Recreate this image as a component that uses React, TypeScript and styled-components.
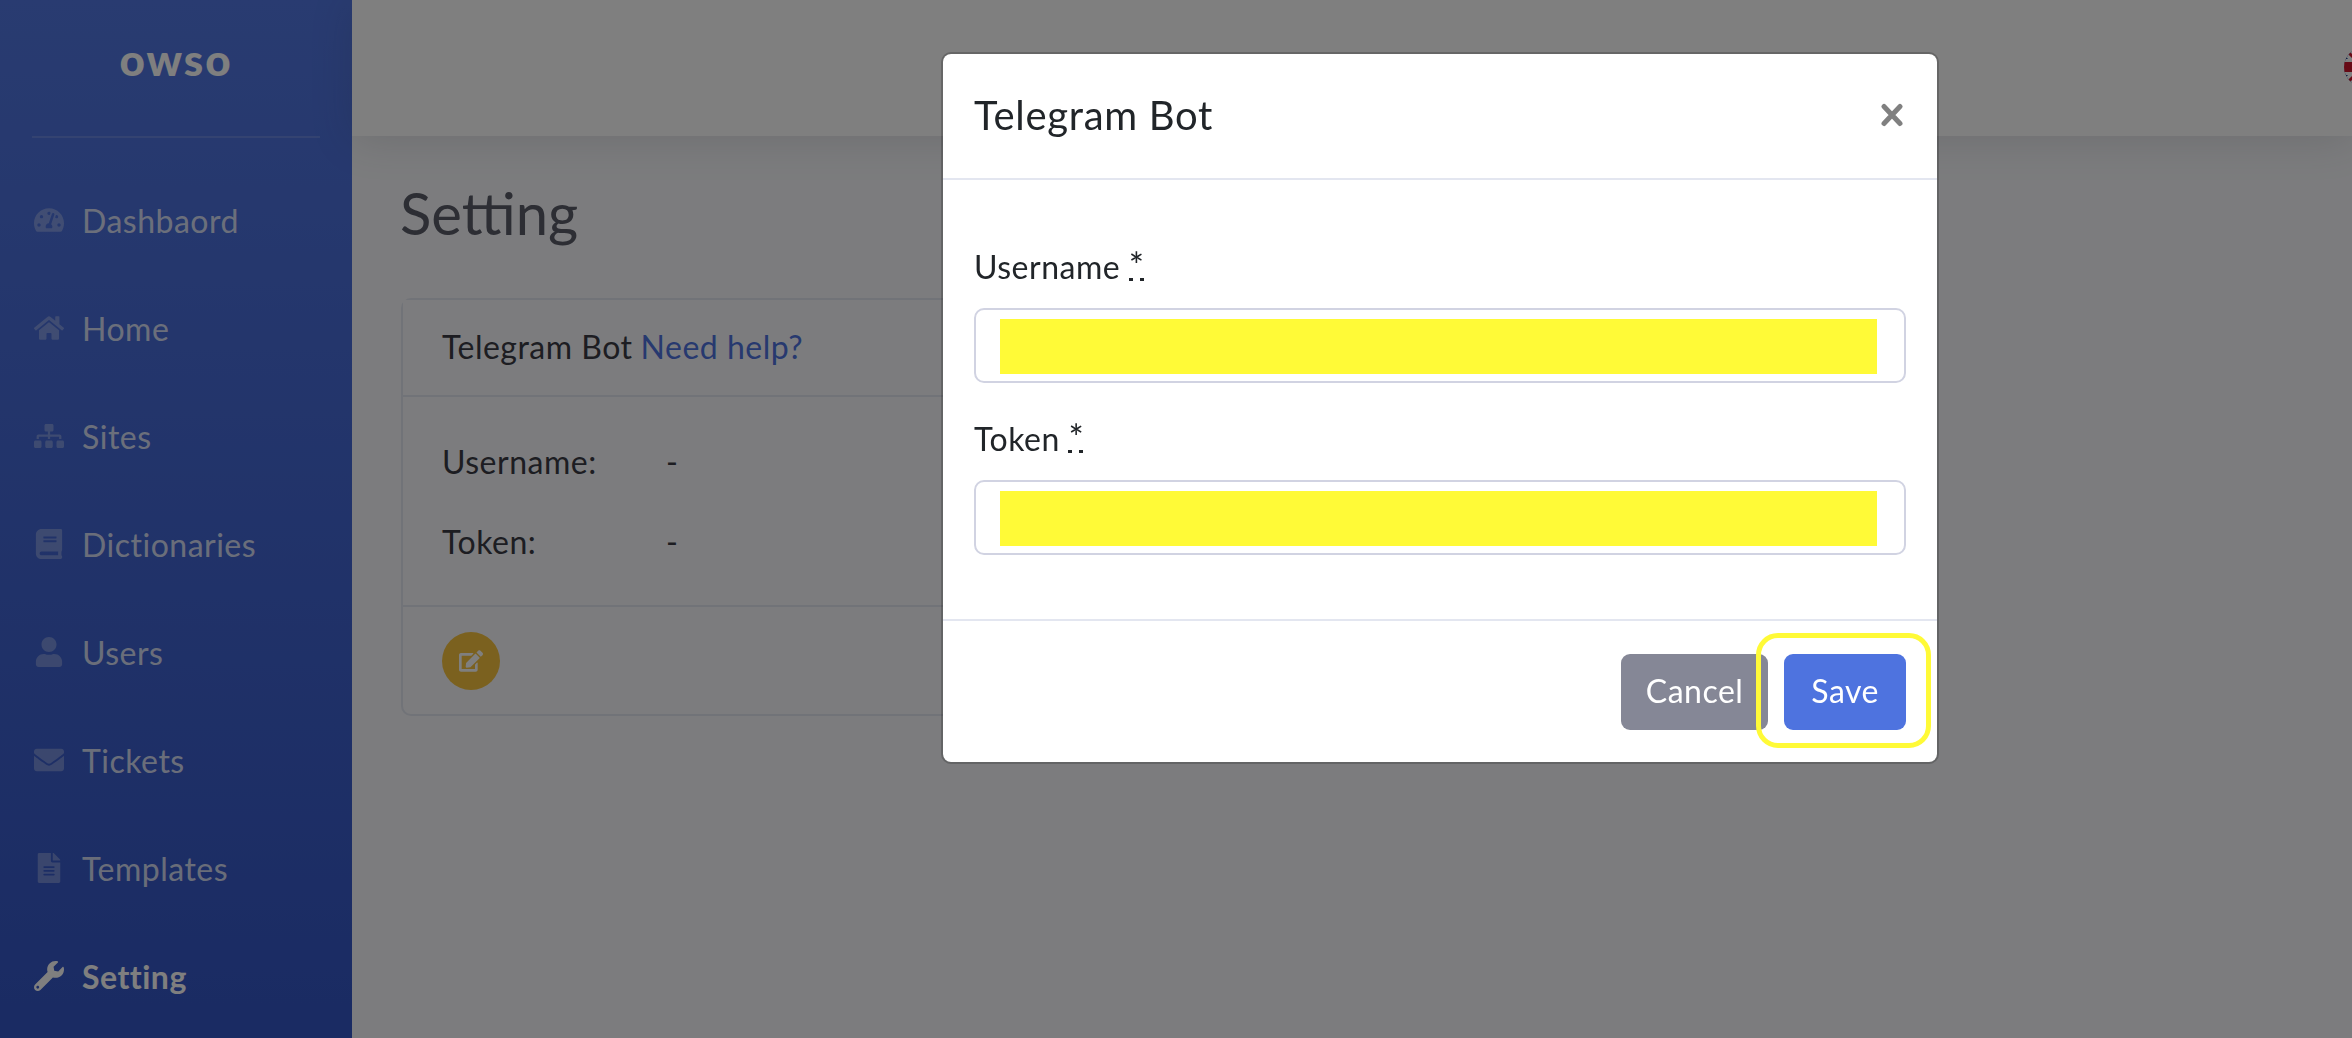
import React from "react";
import styled, { createGlobalStyle } from "styled-components";
import { FaTachometerAlt, FaHome, FaSitemap, FaBook, FaUser, FaEnvelope, FaFileAlt, FaWrench, FaEdit } from "react-icons/fa";

const Global = createGlobalStyle`
  html, body { margin: 0; padding: 0; height: 100%; overflow: hidden; background: #f8f9fc; }
  body { font-family: "Lato", "Noto Sans", sans-serif; font-size: 32px; letter-spacing: 0.5px; color: #3a3b45; }
  * { box-sizing: border-box; }
`;

const Page = styled.div`
  display: flex;
  height: 1038px;
  overflow: hidden;
`;
const Sidebar = styled.aside`
  width: 352px;
  flex: none;
  background: linear-gradient(180deg, #5277e2 0%, #3456c6 100%);
  padding: 0;
`;
const Brand = styled.div`
  height: 136px;
  display: flex;
  align-items: center;
  justify-content: center;
  padding-bottom: 19px;
  color: #fff;
  font-weight: 900;
  font-size: 44px;
  letter-spacing: 2px;
`;
const Divider = styled.hr`
  margin: 0 32px;
  border: 0;
  height: 2px;
  background: rgba(255, 255, 255, 0.15);
`;
const Nav = styled.nav`
  display: flex;
  flex-direction: column;
  padding-top: 28px;
`;
const NavItem = styled.a<{ $active?: boolean }>`
  height: 108px;
  display: flex;
  align-items: center;
  padding-left: 32px;
  color: ${(p) => (p.$active ? "#fff" : "rgba(255,255,255,.8)")};
  font-weight: ${(p) => (p.$active ? 700 : 400)};
`;
const NavIcon = styled.span<{ $active?: boolean }>`
  width: 34px;
  margin-right: 16px;
  display: flex;
  justify-content: center;
  font-size: 30px;
  color: ${(p) => (p.$active ? "#fff" : "rgba(255,255,255,.3)")};
`;
const Main = styled.main`
  flex: 1;
  min-width: 0;
  display: flex;
  flex-direction: column;
`;
const Topbar = styled.header`
  height: 136px;
  flex: none;
  background: #fff;
  box-shadow: 0 4px 40px rgba(58, 59, 69, 0.15);
  display: flex;
  justify-content: flex-end;
  align-items: flex-start;
  padding-top: 48px;
  overflow: hidden;
`;
const Flag = styled.svg`
  width: 38px;
  height: 38px;
  flex: none;
  margin-right: -30px;
`;
const Content = styled.div`
  padding: 45px 48px;
`;
const Title = styled.h1`
  margin: 0 0 53px;
  font-weight: 400;
  font-size: 58px;
  line-height: 64px;
  letter-spacing: 0;
  color: #5a5c69;
`;
const Card = styled.section`
  width: 1450px;
  height: 418px;
  margin-left: 1px;
  border: 2px solid #e3e6f0;
  border-radius: 10px;
  display: flex;
  flex-direction: column;
`;
const CardHeader = styled.div`
  height: 97px;
  flex: none;
  padding: 0 39px 2px;
  display: flex;
  align-items: center;
  gap: 8px;
  border-bottom: 2px solid #e3e6f0;
  background: #f8f9fc;
  color: #3a3b45;
`;
const HelpLink = styled.a`
  color: #4e73df;
`;
const CardBody = styled.div`
  height: 210px;
  flex: none;
  padding: 24px 39px 0;
  border-bottom: 2px solid #e3e6f0;
`;
const InfoRow = styled.div`
  height: 80px;
  display: flex;
  align-items: center;
`;
const InfoLabel = styled.span`
  width: 224px;
`;
const CardFooter = styled.div`
  flex: 1;
  display: flex;
  align-items: center;
  padding: 0 39px;
`;
const EditButton = styled.button`
  width: 58px;
  height: 58px;
  border: 0;
  border-radius: 50%;
  background: #f6c23e;
  color: #fff;
  font-size: 24px;
  padding: 0;
  display: flex;
  align-items: center;
  justify-content: center;
`;
const Backdrop = styled.div`
  position: fixed;
  inset: 0;
  background: rgba(0, 0, 0, 0.5);
  padding: 52px 0 0 941px;
`;
const Modal = styled.div`
  position: relative;
  width: 998px;
  height: 712px;
  background: #fff;
  border: 2px solid rgba(0, 0, 0, 0.2);
  background-clip: padding-box;
  border-radius: 10px;
  display: flex;
  flex-direction: column;
`;
const ModalHeader = styled.div`
  height: 126px;
  flex: none;
  display: flex;
  align-items: center;
  justify-content: space-between;
  padding: 0 34px 3px 31px;
  border-bottom: 2px solid #e3e6f0;
`;
const ModalTitle = styled.h5`
  margin: 0;
  font-weight: 400;
  font-size: 40px;
  letter-spacing: 0.7px;
  color: #212529;
`;
const CloseIcon = styled.svg`
  width: 22px;
  height: 24px;
  display: block;
`;
const ModalBody = styled.div`
  height: 441px;
  flex: none;
  padding: 64px 31px 0;
  border-bottom: 2px solid #e3e6f0;
`;
const Field = styled.div`
  margin-bottom: 33px;
`;
const Label = styled.label`
  display: block;
  height: 45px;
  line-height: 45px;
  margin-bottom: 19px;
  color: #212529;
`;
const Req = styled.abbr`
  display: inline-block;
  width: 15px;
  font-size: 36px;
  line-height: 36px;
  text-align: center;
  background:
    linear-gradient(#212529 0 0) left bottom 2px / 4px 3px no-repeat,
    linear-gradient(#212529 0 0) right bottom 2px / 4px 3px no-repeat;
`;
const InputBox = styled.div`
  width: 932px;
  height: 75px;
  border: 2px solid #d1d3e2;
  border-radius: 10px;
  padding: 9px 27px 7px 24px;
`;
const Redaction = styled.div`
  height: 100%;
  background: #fffa37;
`;
const ModalFooter = styled.div`
  flex: 1;
  display: flex;
  justify-content: flex-end;
  gap: 16px;
  padding: 33px 31px 0;
`;
const Button = styled.button<{ $primary?: boolean }>`
  height: 76px;
  border: 0;
  border-radius: 9px;
  padding: 0 ${(p) => (p.$primary ? 27 : 25)}px 4px;
  font: inherit;
  letter-spacing: inherit;
  color: #fff;
  background: ${(p) => (p.$primary ? "#4e73df" : "#858796")};
`;
const Ring = styled.div`
  position: absolute;
  left: 813px;
  top: 579px;
  width: 175px;
  height: 115px;
  border: 5px solid #fffa37;
  border-radius: 22px;
  pointer-events: none;
`;

const items = [
  ["Dashbaord", FaTachometerAlt],
  ["Home", FaHome],
  ["Sites", FaSitemap],
  ["Dictionaries", FaBook],
  ["Users", FaUser],
  ["Tickets", FaEnvelope],
  ["Templates", FaFileAlt],
  ["Setting", FaWrench],
] as const;

export default function App() {
  return (
    <>
      <Global />
      <Page>
        <Sidebar>
          <Brand>owso</Brand>
          <Divider />
          <Nav>
            {items.map(([label, Icon]) => {
              const active = label === "Setting";
              return (
                <NavItem key={label} $active={active}>
                  <NavIcon $active={active}>
                    <Icon />
                  </NavIcon>
                  {label}
                </NavItem>
              );
            })}
          </Nav>
        </Sidebar>
        <Main>
          <Topbar>
            <Flag viewBox="0 0 38 38">
              <defs>
                <clipPath id="flag-clip">
                  <circle cx="19" cy="19" r="19" />
                </clipPath>
              </defs>
              <g clipPath="url(#flag-clip)">
                <rect width="38" height="38" fill="#00247d" />
                <path d="M0 0L38 38M38 0L0 38" stroke="#fff" strokeWidth="10" />
                <path d="M0 0L38 38M38 0L0 38" stroke="#cf142b" strokeWidth="3" />
                <path d="M19 0V38M0 19H38" stroke="#fff" strokeWidth="16" />
                <path d="M19 0V38M0 19H38" stroke="#cf142b" strokeWidth="10" />
              </g>
            </Flag>
          </Topbar>
          <Content>
            <Title>Setting</Title>
            <Card>
              <CardHeader>
                Telegram Bot <HelpLink>Need help?</HelpLink>
              </CardHeader>
              <CardBody>
                <InfoRow>
                  <InfoLabel>Username:</InfoLabel>-
                </InfoRow>
                <InfoRow>
                  <InfoLabel>Token:</InfoLabel>-
                </InfoRow>
              </CardBody>
              <CardFooter>
                <EditButton aria-label="Edit">
                  <FaEdit />
                </EditButton>
              </CardFooter>
            </Card>
          </Content>
        </Main>
      </Page>
      <Backdrop>
        <Modal>
          <ModalHeader>
            <ModalTitle>Telegram Bot</ModalTitle>
            <CloseIcon viewBox="0 0 22 24">
              <path d="M3 3.5L19 20.5M19 3.5L3 20.5" stroke="#808080" strokeWidth="5" strokeLinecap="round" />
            </CloseIcon>
          </ModalHeader>
          <ModalBody>
            <Field>
              <Label>
                Username <Req>*</Req>
              </Label>
              <InputBox>
                <Redaction />
              </InputBox>
            </Field>
            <Field>
              <Label>
                Token <Req>*</Req>
              </Label>
              <InputBox>
                <Redaction />
              </InputBox>
            </Field>
          </ModalBody>
          <ModalFooter>
            <Button>Cancel</Button>
            <Button $primary>Save</Button>
          </ModalFooter>
          <Ring />
        </Modal>
      </Backdrop>
    </>
  );
}
